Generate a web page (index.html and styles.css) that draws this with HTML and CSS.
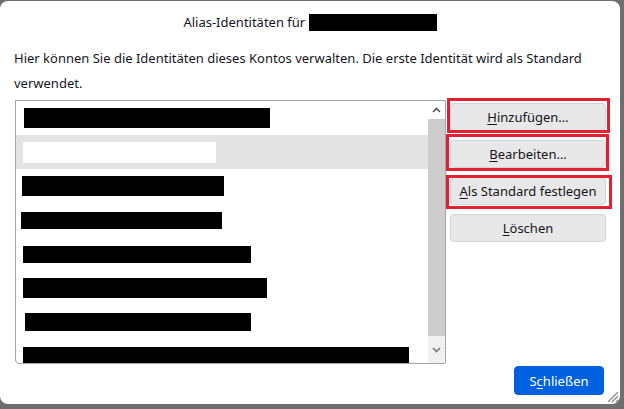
FILE: index.html
```html
<!DOCTYPE html>
<html lang="de">
<head>
<meta charset="utf-8">
<title>Alias-Identitäten</title>
<link rel="stylesheet" href="styles.css">
</head>
<body>
<div class="dialog">
  <div class="title">Alias-Identitäten für <span class="redact title-redact"></span></div>
  <p class="desc">Hier können Sie die Identitäten dieses Kontos verwalten. Die erste Identität wird als Standard verwendet.</p>
  <div class="main">
    <div class="list">
      <div class="rows">
        <div class="row"><span class="redact" style="margin-left:8px;width:246px;height:20px"></span></div>
        <div class="row selected"><span class="redact white" style="margin-left:7px;width:193px;height:21px"></span></div>
        <div class="row"><span class="redact" style="margin-left:6px;width:202px;height:20px"></span></div>
        <div class="row"><span class="redact" style="margin-left:5px;width:201px;height:17px"></span></div>
        <div class="row"><span class="redact" style="margin-left:7px;width:228px;height:17px"></span></div>
        <div class="row"><span class="redact" style="margin-left:7px;width:244px;height:20px"></span></div>
        <div class="row"><span class="redact" style="margin-left:9px;width:226px;height:18px"></span></div>
        <div class="row"><span class="redact" style="margin-left:7px;width:386px;height:18px"></span></div>
      </div>
      <div class="scrollbar">
        <div class="sb-btn sb-up">
          <svg width="9" height="6" viewBox="0 0 9 6"><path d="M1 5 L4.5 1.5 L8 5" fill="none" stroke="#555" stroke-width="1.6"/></svg>
        </div>
        <div class="sb-thumb"></div>
        <div class="sb-btn sb-down">
          <svg width="9" height="6" viewBox="0 0 9 6"><path d="M1 1 L4.5 4.5 L8 1" fill="none" stroke="#777" stroke-width="1.6"/></svg>
        </div>
      </div>
    </div>
    <div class="actions">
      <button class="btn mark mark-1"><u>H</u>inzufügen…</button>
      <button class="btn mark mark-2"><u>B</u>earbeiten…</button>
      <button class="btn mark mark-3"><u>A</u>ls Standard festlegen</button>
      <button class="btn"><u>L</u>öschen</button>
    </div>
  </div>
  <div class="footer">
    <button class="btn primary">S<u>c</u>hließen</button>
  </div>
  <svg class="grip" width="14" height="14" viewBox="0 0 14 14">
    <path d="M13 3 L3 13 M13 7 L7 13 M13 11 L11 13" stroke="#8a8a8a" stroke-width="1.2" fill="none"/>
  </svg>
</div>
</body>
</html>
```
FILE: styles.css
```css
html, body {
  margin: 0;
  padding: 0;
}
body {
  background: #6e6e6e;
  width: 624px;
  height: 409px;
  overflow: hidden;
  font-family: "Noto Sans", "Open Sans", sans-serif;
  font-size: 13px;
  color: #15141a;
}
.dialog {
  position: relative;
  margin-top: 1px;
  width: 620px;
  height: 403px;
  background: #ffffff;
  border-radius: 8px;
  box-sizing: border-box;
}
.title {
  padding-top: 9px;
  height: 24px;
  line-height: 24px;
  text-align: center;
  font-weight: 400;
}
.redact {
  display: inline-block;
  background: #000;
  vertical-align: middle;
}
.redact.white {
  background: #fff;
}
.title-redact {
  width: 128px;
  height: 17px;
  margin-top: -3px;
}
.desc {
  margin: 12px 14px 0 14px;
  line-height: 25px;
  height: 53px;
}
.main {
  display: flex;
  align-items: flex-start;
  margin-left: 15px;
  margin-top: 1px;
}
.list {
  display: flex;
  width: 431px;
  height: 264px;
  border: 1px solid #a5a5a5;
  border-radius: 0 0 2px 4px;
  box-sizing: border-box;
  overflow: hidden;
}
.rows {
  flex: 1;
  overflow: hidden;
}
.row {
  height: 34px;
  display: flex;
  align-items: center;
}
.row.selected {
  background: #e3e3e3;
}
.scrollbar {
  width: 17px;
  display: flex;
  flex-direction: column;
}
.sb-btn {
  display: flex;
  align-items: center;
  justify-content: center;
}
.sb-up {
  height: 18px;
  background: #ffffff;
}
.sb-thumb {
  flex: 1;
  background: #cdcdcd;
}
.sb-down {
  height: 27px;
  background: #f0f0f0;
}
.actions {
  display: flex;
  flex-direction: column;
  gap: 9px;
  margin-left: 4px;
  margin-top: 3px;
}
.btn {
  position: relative;
  font-family: inherit;
  font-size: 13px;
  color: #15141a;
  height: 28px;
  width: 156px;
  background: #e8e8e9;
  border: 1px solid #d4d4d6;
  border-radius: 4px;
  padding: 0;
}
.btn u {
  text-decoration-thickness: 1px;
  text-underline-offset: 2px;
}
.mark::after {
  content: "";
  position: absolute;
  border: 3px solid #e3202f;
  pointer-events: none;
}
.mark-1::after {
  top: -6px;
  left: -4px;
  right: -5px;
  bottom: -3px;
}
.mark-2::after {
  top: -7px;
  left: -5px;
  right: -4px;
  bottom: -4px;
}
.mark-3::after {
  top: -3px;
  left: -5px;
  right: -7px;
  bottom: -5px;
}
.footer {
  display: flex;
  justify-content: flex-end;
  padding-right: 16px;
  margin-top: 2px;
}
.btn.primary {
  width: 90px;
  height: 29px;
  background: #0061e0;
  border-color: #0061e0;
  color: #ffffff;
}
.grip {
  position: absolute;
  right: 1px;
  bottom: 1px;
}
```
